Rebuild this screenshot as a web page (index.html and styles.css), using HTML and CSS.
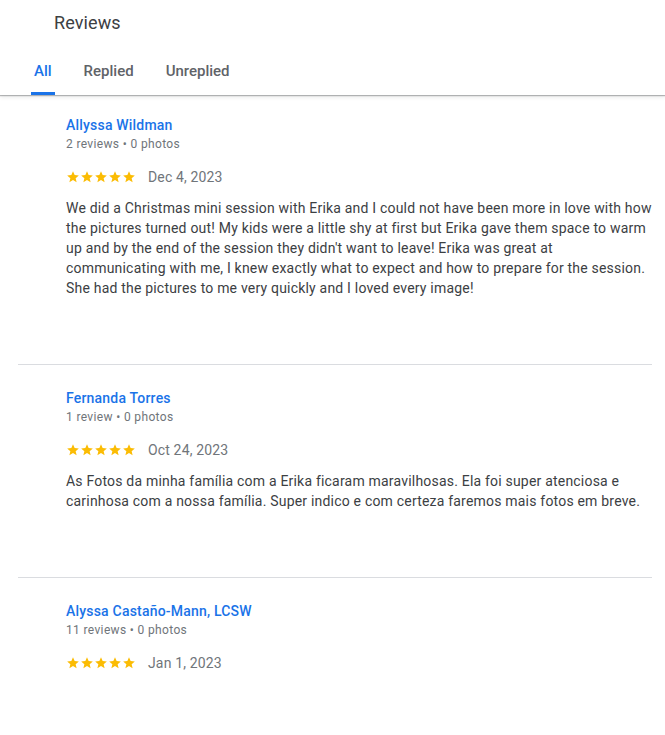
FILE: index.html
```html
<!DOCTYPE html>
<html lang="en">
<head>
    <meta charset="UTF-8">
    <meta name="viewport" content="width=device-width, initial-scale=1.0">
    <title>Reviews</title>
    <link rel="stylesheet" href="styles.css">
</head>
<body>
    <svg width="0" height="0" class="defs">
        <symbol id="star" viewBox="0 0 24 24">
            <path d="M12 17.27L18.18 21l-1.64-7.03L22 9.24l-7.19-.61L12 2 9.19 8.63 2 9.24l5.46 4.73L5.82 21z"/>
        </symbol>
    </svg>

    <div class="header">
        <div class="heading">Reviews</div>
        <div class="tabs">
            <div class="tab active">All</div>
            <div class="tab">Replied</div>
            <div class="tab">Unreplied</div>
        </div>
    </div>

    <div class="review-list">
        <div class="review">
            <div class="name">Allyssa Wildman</div>
            <div class="meta">2 reviews • 0 photos</div>
            <div class="rating">
                <div class="stars">
                    <svg><use href="#star"/></svg><svg><use href="#star"/></svg><svg><use href="#star"/></svg><svg><use href="#star"/></svg><svg><use href="#star"/></svg>
                </div>
                <span class="date">Dec 4, 2023</span>
            </div>
            <div class="text">We did a Christmas mini session with Erika and I could not have been more in love with how the pictures turned out! My kids were a little shy at first but Erika gave them space to warm up and by the end of the session they didn't want to leave! Erika was great at communicating with me, I knew exactly what to expect and how to prepare for the session. She had the pictures to me very quickly and I loved every image!</div>
        </div>

        <div class="review">
            <div class="name">Fernanda Torres</div>
            <div class="meta">1 review • 0 photos</div>
            <div class="rating">
                <div class="stars">
                    <svg><use href="#star"/></svg><svg><use href="#star"/></svg><svg><use href="#star"/></svg><svg><use href="#star"/></svg><svg><use href="#star"/></svg>
                </div>
                <span class="date">Oct 24, 2023</span>
            </div>
            <div class="text">As Fotos da minha família com a Erika ficaram maravilhosas. Ela foi super atenciosa e carinhosa com a nossa família. Super indico e com certeza faremos mais fotos em breve.</div>
        </div>

        <div class="review">
            <div class="name">Alyssa Castaño-Mann, LCSW</div>
            <div class="meta">11 reviews • 0 photos</div>
            <div class="rating">
                <div class="stars">
                    <svg><use href="#star"/></svg><svg><use href="#star"/></svg><svg><use href="#star"/></svg><svg><use href="#star"/></svg><svg><use href="#star"/></svg>
                </div>
                <span class="date">Jan 1, 2023</span>
            </div>
        </div>
    </div>
</body>
</html>
```
FILE: styles.css
```css
body {
    margin: 0;
    font-family: Roboto, 'Liberation Sans', Arial, sans-serif;
    background: #fff;
    color: #3c4043;
}

.defs {
    position: absolute;
}

.header {
    height: 95px;
    box-sizing: border-box;
    padding-top: 11px;
    box-shadow: 0 1px 1px rgba(60,64,67,0.35), 0 2px 4px rgba(60,64,67,0.12);
    display: flex;
    flex-direction: column;
}

.heading {
    padding-left: 54px;
    font-size: 18px;
    line-height: 24px;
    color: #3c4043;
    letter-spacing: 0.1px;
}

.tabs {
    display: flex;
    gap: 26px;
    padding-left: 31px;
    margin-top: auto;
}

.tab {
    padding: 3px 3px 0;
    font-size: 15px;
    font-weight: 500;
    line-height: 20px;
    color: #5f6368;
    height: 37px;
    box-sizing: border-box;
    border-bottom: 3px solid transparent;
}

.tab.active {
    color: #1a73e8;
    border-bottom-color: #1a73e8;
    border-radius: 3px 3px 0 0;
}

.review-list {
    margin: 0 13px 0 18px;
}

.review {
    padding: 23px 0 66px 48px;
    border-bottom: 1px solid #dadce0;
}

.review:first-child {
    padding-top: 20px;
}

.review:last-child {
    border-bottom: none;
}

.name {
    font-size: 14px;
    font-weight: 500;
    line-height: 20px;
    color: #1a73e8;
    letter-spacing: 0.2px;
}

.meta {
    margin-top: 1px;
    font-size: 12px;
    line-height: 16px;
    color: #70757a;
    letter-spacing: 0.35px;
}

.rating {
    display: flex;
    align-items: center;
    gap: 12px;
    margin-top: 15px;
    height: 20px;
}

.stars {
    display: flex;
}

.stars svg {
    width: 14px;
    height: 14px;
    fill: #fbbc04;
}

.date {
    font-size: 14px;
    color: #70757a;
    letter-spacing: 0.15px;
}

.text {
    margin-top: 11px;
    font-size: 14px;
    line-height: 20px;
    color: #3c4043;
    letter-spacing: 0.2px;
}
```
